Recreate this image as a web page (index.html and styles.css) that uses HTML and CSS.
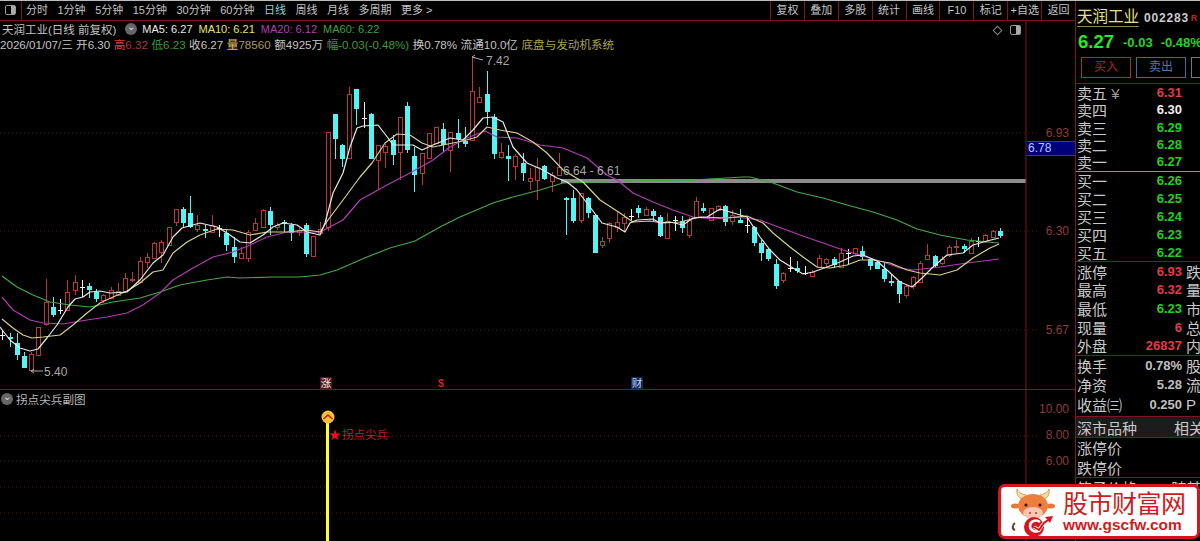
FILE: index.html
```html
<!DOCTYPE html>
<html lang="zh-CN">
<head>
    <meta charset="UTF-8">
    <title>天润工业 日线</title>
    <link rel="stylesheet" href="styles.css">
</head>
<body>
    <div class="app">
        <div class="main">
            <div class="toolbar">
                <div class="panel-btn"><span class="panel-icon"></span></div>
                <div class="tabs">
                    <span>分时</span><span>1分钟</span><span>5分钟</span><span>15分钟</span><span>30分钟</span><span>60分钟</span>
                    <span class="active">日线</span><span>周线</span><span>月线</span><span>多周期</span><span>更多 &gt;</span>
                </div>
                <div class="tools">
                    <span>复权</span><span>叠加</span><span>多股</span><span>统计</span><span>画线</span><span>F10</span><span>标记</span><span>+自选</span><span>返回</span>
                </div>
            </div>

            <div class="pane pane-top">
                <svg class="chart" viewBox="0 21 1075 368" width="1075" height="368">
                    <g class="grid">
                        <line x1="0" y1="133" x2="1040" y2="133"/>
                        <line x1="0" y1="231" x2="1040" y2="231"/>
                        <line x1="0" y1="330" x2="1040" y2="330"/>
                    </g>
                    <rect class="band" x="561" y="179" width="465" height="4"/>
                    <g id="candles"></g>
                    <g id="averages"></g>
                    <path class="pointer" d="M475 58l-3-1 3-2M472 57l11 3M43 371H31l3-2M31 371l3 2"/>
                    <text class="note" x="486" y="65">7.42</text>
                    <text class="note" x="44" y="376">5.40</text>
                    <text class="note" x="563" y="175">6.64 - 6.61</text>
                    <line class="axis" x1="1026" y1="21" x2="1026" y2="389"/>
                    <text class="tick" x="1069" y="137" text-anchor="end">6.93</text>
                    <text class="tick" x="1069" y="235" text-anchor="end">6.30</text>
                    <text class="tick" x="1069" y="334" text-anchor="end">5.67</text>
                </svg>
                <div class="legend">
                    <div class="legend-line">
                        <span class="title">天润工业(日线 前复权)</span>
                        <span class="chevron">&#8964;</span>
                        <span class="ma5">MA5: 6.27</span>
                        <span class="ma10">MA10: 6.21</span>
                        <span class="ma20">MA20: 6.12</span>
                        <span class="ma60">MA60: 6.22</span>
                    </div>
                    <div class="legend-line quote">
                        <span>2026/01/07/三 开6.30</span>
                        <span class="up"><b>高</b>6.32</span>
                        <span class="down"><b>低</b>6.23</span>
                        <span>收6.27</span>
                        <span class="vol"><b>量</b>78560</span>
                        <span>额4925万</span>
                        <span class="down"><b>幅</b>-0.03(-0.48%)</span>
                        <span>换0.78%</span>
                        <span>流通10.0亿</span>
                        <span class="formula">底盘与发动机系统</span>
                    </div>
                </div>
                <div class="corner-icons">
                    <span class="diamond"></span>
                    <span class="panel-icon"></span>
                </div>
                <div class="price-tag">6.78</div>
                <span class="event event-rise">涨</span>
                <span class="event event-dollar">$</span>
                <span class="event event-fin">财</span>
            </div>

            <div class="pane pane-sub">
                <svg class="chart" viewBox="0 390 1075 151" width="1075" height="151">
                    <g class="grid">
                        <line x1="0" y1="436" x2="1040" y2="436"/>
                        <line x1="0" y1="461" x2="1040" y2="461"/>
                        <line x1="0" y1="487" x2="1040" y2="487"/>
                        <line x1="0" y1="513" x2="1040" y2="513"/>
                    </g>
                    <rect class="signal" x="326" y="418" width="3" height="123"/>
                    <circle class="signal-dot" cx="328" cy="417" r="6.5"/>
                    <path class="signal-mark" d="M323.5 419l4.5-4 4.5 4"/>
                    <path class="signal-star" d="M335 429.500l1.500 4h4.300l-3.500 2.600 1.300 4.200-3.600-2.500-3.600 2.500 1.300-4.200-3.500-2.600h4.300z"/>
                    <text class="signal-text" x="342" y="439">拐点尖兵</text>
                    <line class="axis" x1="1026" y1="390" x2="1026" y2="541"/>
                    <text class="tick" x="1069" y="413" text-anchor="end">10.00</text>
                    <text class="tick" x="1069" y="439" text-anchor="end">8.00</text>
                    <text class="tick" x="1069" y="465" text-anchor="end">6.00</text>
                </svg>
                <div class="legend legend-sub">
                    <span class="chevron">&#8964;</span>
                    <span class="sub-title">拐点尖兵副图</span>
                </div>
            </div>
        </div>

        <div class="side">
            <div class="quote-head">
                <div class="name-row">
                    <span class="stock-name">天润工业</span>
                    <span class="stock-code">002283</span>
                    <span class="stock-r">R</span>
                </div>
                <div class="price-row">
                    <span class="last">6.27</span>
                    <span class="change">-0.03</span>
                    <span class="change">-0.48%</span>
                </div>
                <div class="trade-row">
                    <span class="trade buy">买入</span>
                    <span class="trade sell">卖出</span>
                    <span class="trade more"></span>
                </div>
            </div>

            <div class="block book-sell">
                <div class="row"><span class="label">卖五 <i>¥</i></span><span class="val red">6.31</span></div>
                <div class="row"><span class="label">卖四</span><span class="val white">6.30</span></div>
                <div class="row"><span class="label">卖三</span><span class="val green">6.29</span></div>
                <div class="row"><span class="label">卖二</span><span class="val green">6.28</span></div>
                <div class="row"><span class="label">卖一</span><span class="val green">6.27</span></div>
            </div>
            <div class="block book-buy">
                <div class="row"><span class="label">买一</span><span class="val green">6.26</span></div>
                <div class="row"><span class="label">买二</span><span class="val green">6.25</span></div>
                <div class="row"><span class="label">买三</span><span class="val green">6.24</span></div>
                <div class="row"><span class="label">买四</span><span class="val green">6.23</span></div>
                <div class="row"><span class="label">买五</span><span class="val green">6.22</span></div>
            </div>
            <div class="block stats">
                <div class="row"><span class="label">涨停</span><span class="val red">6.93</span><span class="extra">跌</span></div>
                <div class="row"><span class="label">最高</span><span class="val red">6.32</span><span class="extra">量</span></div>
                <div class="row"><span class="label">最低</span><span class="val green">6.23</span><span class="extra">市</span></div>
                <div class="row"><span class="label">现量</span><span class="val red">6</span><span class="extra">总</span></div>
                <div class="row"><span class="label">外盘</span><span class="val red">26837</span><span class="extra">内</span></div>
            </div>
            <div class="block finance">
                <div class="row"><span class="label">换手</span><span class="val grey">0.78%</span><span class="extra">股</span></div>
                <div class="row"><span class="label">净资</span><span class="val grey">5.28</span><span class="extra">流</span></div>
                <div class="row"><span class="label">收益㈢</span><span class="val grey">0.250</span><span class="extra">P</span></div>
            </div>
            <div class="block tab-row">
                <span class="label">深市品种</span><span class="extra">相关</span>
            </div>
            <div class="block limits">
                <div class="row"><span class="label">涨停价</span></div>
                <div class="row"><span class="label">跌停价</span></div>
            </div>
            <div class="row last-row"><span class="label">筹子价格 98%随基准</span></div>
        </div>

        <div class="watermark">
            <svg class="cow" viewBox="0 0 50 50" width="50" height="50">
                <path d="M6 36c-3 2-3 6 0 7" fill="none" stroke="#6b3a1e" stroke-width="2"/>
                <path d="M14 12C9 11 7 7 8 2c2 4 5 5 9 6z" fill="#f7dc9a" stroke="#b0702a" stroke-width=".6"/>
                <path d="M34 12c5-1 7-5 6-10-2 4-5 5-9 6z" fill="#f7dc9a" stroke="#b0702a" stroke-width=".6"/>
                <ellipse cx="6" cy="19" rx="4" ry="2.500" fill="#e8763a"/>
                <ellipse cx="42" cy="19" rx="4" ry="2.500" fill="#e8763a"/>
                <ellipse cx="24" cy="19" rx="15" ry="12" fill="#ee7d3e"/>
                <ellipse cx="24" cy="26" rx="10" ry="6" fill="#f9c6b4"/>
                <circle cx="17" cy="18" r="1.600" fill="#3a1d10"/>
                <circle cx="31" cy="18" r="1.600" fill="#3a1d10"/>
                <circle cx="21" cy="26" r="1" fill="#a0402a"/>
                <circle cx="27" cy="26" r="1" fill="#a0402a"/>
                <circle cx="25" cy="40" r="10" fill="#d8141c"/>
                <path d="M31 35c-4-3-10-1-10 4s6 7 10 4" fill="none" stroke="#fff" stroke-width="2.500"/>
                <path d="M25 40l5 3 4-6 4-2" fill="none" stroke="#fff" stroke-width="3.500"/>
                <path d="M25 40l5 3 5-7 4-3" fill="none" stroke="#d8141c" stroke-width="2"/>
                <path d="M44 29l-8 1 5 6z" fill="#d8141c"/>
            </svg>
            <div class="site">
                <div class="site-name">股市财富网</div>
                <div class="site-url">www.gscfw.com</div>
            </div>
        </div>
    </div>

    <script src="script.js"></script>
</body>
</html>
```

FILE: styles.css
```css
* {
    box-sizing: border-box;
}

body {
    margin: 0;
    background-color: #000;
    overflow: hidden;
    font-family: "Liberation Sans", "Noto Sans CJK SC", sans-serif;
    color: #c4c4c4;
}

.app {
    position: relative;
    display: flex;
    width: 1200px;
    height: 541px;
    overflow: hidden;
    background-color: #000;
    border-top: 1px solid #bbb;
}

.main {
    width: 1075px;
    flex: none;
}

/* top bar */
.toolbar {
    display: flex;
    height: 20px;
    border-bottom: 1px solid #7c1622;
    font-size: 11px;
    line-height: 18px;
}

.panel-btn {
    width: 22px;
    padding: 4px 0 0 5px;
    border-right: 1px solid #7c1622;
}

.panel-icon {
    display: block;
    width: 11px;
    height: 10px;
    border: 1px solid #999;
    border-radius: 2px;
    background: linear-gradient(90deg, transparent 55%, #aaa 55%);
}

.tabs {
    display: flex;
    gap: 9.500px;
    padding-left: 4px;
    flex: 1;
    white-space: nowrap;
}

.tabs .active {
    color: #7fd8d8;
}

.tools {
    display: flex;
    width: 305px;
    flex: none;
}

.tools span {
    width: 34px;
    text-align: center;
    border-left: 1px solid #7c1622;
    white-space: nowrap;
}

/* chart panes */
.pane {
    position: relative;
}

.pane-top {
    height: 368px;
}

.pane-sub {
    height: 151px;
    border-top: 1px solid #7c1622;
}

.chart {
    display: block;
}

.grid line {
    stroke: #5c1a1a;
    stroke-dasharray: 1 3;
}

.band {
    fill: #8c8c8c;
}

.axis {
    stroke: #7c1622;
}

.tick {
    fill: #8e3c3c;
    font-size: 12px;
}

.note {
    fill: #a8a8a8;
    font-size: 12px;
}

.pointer {
    fill: none;
    stroke: #aaa;
}

.legend {
    position: absolute;
    left: 2px;
    top: 0;
    font-size: 11px;
    white-space: nowrap;
}

.legend-line {
    display: flex;
    align-items: center;
    height: 15px;
}

.legend-line .title {
    font-size: 11.500px;
    margin-right: 9px;
}

.chevron {
    width: 12px;
    height: 12px;
    margin-right: 5px;
    border-radius: 50%;
    background-color: #666;
    color: #ddd;
    font-size: 10px;
    line-height: 7px;
    text-align: center;
}

.ma5 {
    color: #e8e8e8;
    margin-right: 6px;
}

.ma10 {
    color: #e8e070;
    margin-right: 6px;
}

.ma20 {
    color: #b040b0;
    margin-right: 6px;
}

.ma60 {
    color: #3fa03f;
}

.quote {
    gap: 3.500px;
    margin-left: -2px;
    font-size: 11.600px;
}

.quote b {
    font-weight: normal;
}

.up {
    color: #a83a3a;
}

.up b {
    color: #e04040;
}

.down {
    color: #3b9a3b;
}

.vol {
    color: #a89a60;
}

.vol b {
    color: #e0c060;
}

.formula {
    color: #a8a050;
}

.corner-icons {
    position: absolute;
    left: 994px;
    top: 4px;
    display: flex;
    align-items: center;
    gap: 9px;
}

.diamond {
    width: 7px;
    height: 7px;
    border: 1px solid #888;
    transform: rotate(45deg);
}

.price-tag {
    position: absolute;
    left: 1027px;
    top: 120px;
    width: 48px;
    height: 15px;
    padding-left: 1px;
    background-color: #00007c;
    border-top: 1px solid #6a2a6a;
    border-bottom: 1px solid #6a2a6a;
    color: #b8c8ff;
    font-size: 12px;
    line-height: 13px;
}

.event {
    position: absolute;
    top: 356px;
    width: 12px;
    height: 12px;
    font-size: 10.500px;
    line-height: 12px;
    text-align: center;
}

.event-rise {
    left: 320px;
    background-color: #5a1218;
    color: #eee;
}

.event-dollar {
    left: 435px;
    color: #d02028;
    font-weight: bold;
}

.event-fin {
    left: 631px;
    background-color: #102a5a;
    color: #c8d8f0;
}

.legend-sub {
    top: 1px;
    left: 1px;
    display: flex;
    align-items: center;
    height: 15px;
}

.legend-sub .chevron {
    margin-right: 3px;
}

.sub-title {
    font-size: 11.600px;
    color: #b8b8b8;
}

.signal {
    fill: #ffff30;
}

.signal-dot {
    fill: #f6c23c;
}

.signal-mark {
    fill: none;
    stroke: #c8201c;
    stroke-width: 1.600;
}

.signal-star {
    fill: #e8101c;
}

.signal-text {
    fill: #c01f28;
    font-size: 11.500px;
}

/* right panel */
.side {
    width: 125px;
    flex: none;
    border-left: 1px solid #7c1622;
    overflow: hidden;
}

.quote-head {
    height: 83px;
    border-bottom: 1px solid #7c1622;
}

.name-row {
    display: flex;
    align-items: center;
    height: 30px;
    padding: 3px 0 0 1px;
}

.stock-name {
    color: #e6e08c;
    font-size: 15.500px;
    border-bottom: 1px solid #8c8850;
    line-height: 18px;
    margin-right: 5px;
}

.stock-code {
    font-size: 12px;
    font-weight: bold;
    letter-spacing: .8px;
    color: #ccc;
    margin-right: 2px;
}

.stock-r {
    font-size: 9px;
    font-weight: bold;
    color: #c02030;
}

.price-row {
    display: flex;
    align-items: center;
    gap: 8px;
    height: 22px;
    padding-left: 2px;
    white-space: nowrap;
    color: #20d820;
    font-size: 13px;
    font-weight: bold;
}

.last {
    color: #28e628;
    font-size: 18.500px;
    margin-right: 1px;
}

.trade-row {
    display: flex;
    gap: 5px;
    padding: 4px 0 0 5px;
}

.trade {
    flex: none;
    width: 50px;
    height: 21px;
    border: 1px solid #a03030;
    font-size: 12px;
    line-height: 18px;
    text-align: center;
    color: #b02828;
}

.trade.sell {
    border-color: #406898;
    color: #4a78b8;
}

.trade.more {
    border-color: #777;
}

.block {
    border-bottom: 1px solid #7c1622;
}

.row {
    display: flex;
    align-items: center;
    padding-left: 1px;
    white-space: nowrap;
}

.label {
    flex: 1;
    font-size: 15px;
    color: #c8c8c8;
}

.label i {
    font-style: normal;
    color: #999;
    font-size: 15px;
}

.val {
    font-size: 13px;
    font-weight: bold;
}

.extra {
    flex: none;
    width: 14px;
    margin-left: 4px;
    font-size: 15px;
    color: #c8c8c8;
    overflow: hidden;
}

.row:not(:has(.extra)) {
    padding-right: 18px;
}

.red {
    color: #e03c46;
}

.green {
    color: #20d020;
}

.white {
    color: #eee;
}

.grey {
    color: #c0c0c0;
}

.book-sell {
    height: 88px;
    border-bottom-color: #a08a8a;
}

.book-sell .row {
    height: 17.300px;
}

.book-buy {
    height: 90px;
}

.book-buy .row {
    height: 17.800px;
}

.stats {
    height: 94px;
}

.stats .row {
    height: 18.600px;
}

.finance {
    height: 61px;
}

.finance .row {
    height: 19.300px;
}

.tab-row {
    display: flex;
    align-items: center;
    height: 21px;
    padding-left: 1px;
    background-color: #1c1c1c;
    white-space: nowrap;
}

.tab-row .extra {
    width: 26px;
}

.limits {
    height: 40px;
}

.limits .row {
    height: 19.500px;
}

.last-row {
    height: 18px;
    padding-right: 0;
}

/* logo in the corner */
.watermark {
    position: absolute;
    left: 998px;
    top: 483px;
    display: flex;
    align-items: center;
    gap: 4px;
    width: 202px;
    height: 55px;
    padding-left: 8px;
    background-color: #fff;
    border: 3px solid #d8141c;
    border-radius: 7px;
}

.cow {
    flex: none;
}

.site {
    color: #d01a22;
    white-space: nowrap;
}

.site-name {
    font-size: 25px;
    line-height: 27px;
    letter-spacing: -.5px;
}

.site-url {
    font-size: 15.400px;
    font-weight: bold;
    line-height: 14px;
}
```

FILE: script.js
```js
// each candle: type, body top, body bottom, high, low (svg y values)
const candles = [
    ['w',335,335,330,340],['c',337,339,333,347],['c',343,355,333,360],['c',356,368,352,368],['r',354,370,352,372],
    ['r',327,355,327,355],['r',302,324,279,326],['c',307,315,297,317],['w',310,310,299,314],['r',292,310,280,311],
    ['r',282,290,275,295],['w',287,287,280,297],['c',286,290,283,298],['c',292,299,289,302],['r',295,300,294,303],
    ['r',290,298,287,299],['r',291,295,283,296],['r',278,291,273,293],['r',279,280,272,282],['r',261,282,257,283],
    ['r',257,262,253,268],['r',243,258,242,259],['r',242,252,240,263],['r',227,245,227,245],['r',209,222,209,226],
    ['c',209,223,207,228],['c',213,227,196,228],['r',225,229,215,232],['c',229,231,225,238],['r',225,232,215,233],
    ['w',228,228,225,237],['c',233,245,229,251],['c',247,257,237,263],['r',253,258,247,259],['r',232,258,230,262],
    ['r',223,230,218,231],['r',210,227,209,227],['c',211,225,207,235],['r',225,227,223,230],['c',222,224,220,232],
    ['c',225,233,223,241],['r',230,232,228,236],['c',225,254,223,257],['r',236,256,236,257],['r',229,233,222,233],
    ['r',132,227,132,231],['c',114,139,114,159],['c',145,159,144,167],['r',94,158,87,159],['c',89,109,89,125],
    ['w',118,118,102,128],['c',114,159,113,159],['r',145,160,145,189],['r',146,152,144,168],['c',140,155,135,165],
    ['r',117,152,117,180],['c',106,150,102,153],['c',156,175,147,192],['r',153,173,153,185],['r',133,158,133,158],
    ['r',127,143,127,144],['c',129,145,123,152],['r',132,150,132,172],['c',133,139,119,148],['c',141,144,127,147],
    ['r',91,140,56,141],['r',97,102,87,102],['c',94,112,71,125],['c',117,154,114,159],['r',152,157,143,159],
    ['c',156,159,145,181],['r',156,166,154,180],['c',163,173,153,181],['r',178,181,168,190],['r',167,180,158,200],
    ['c',166,179,165,180],['r',175,181,172,192],['r',167,175,153,176],['c',198,200,197,235],['c',198,221,190,223],
    ['r',193,220,193,223],['c',198,213,197,218],['c',215,253,215,253],['r',241,245,237,248],['r',223,238,222,243],
    ['r',222,227,212,232],['r',217,223,213,232],['w',216,216,209,220],['c',208,213,205,218],['r',209,215,207,216],
    ['c',211,216,209,222],['c',217,236,215,237],['r',221,238,213,238],['w',220,220,216,231],['c',221,228,216,233],
    ['r',220,235,217,238],['r',201,217,197,217],['c',208,211,203,213],['r',208,220,208,220],['r',206,210,205,210],
    ['c',206,222,205,226],['r',215,221,210,225],['c',220,223,209,223],['w',225,225,217,233],['c',227,243,226,246],
    ['c',243,253,240,261],['c',249,259,248,261],['c',264,286,259,289],['r',273,280,272,283],['w',268,268,257,272],
    ['c',268,271,261,273],['w',273,273,266,275],['r',272,276,270,277],['r',258,267,255,268],['r',259,263,258,267],
    ['c',259,265,257,268],['r',253,267,248,268],['w',253,253,249,264],['r',248,253,248,255],['c',251,257,246,260],
    ['c',259,266,258,270],['c',262,269,262,269],['c',269,279,263,282],['c',281,283,274,286],['c',281,294,281,303],
    ['r',286,295,285,298],['r',277,286,276,289],['r',263,282,261,283],['r',255,259,244,260],['c',256,266,255,268],
    ['r',259,263,256,265],['r',247,255,245,257],['r',246,247,240,253],['c',246,249,244,253],['r',241,253,238,254],
    ['w',241,241,237,247],['r',235,241,234,243],['r',231,237,230,237],['c',231,236,228,238]
];

// moving averages, as x y pairs
const averages = {
    '#e8e8e8': '0,327 10,340 20,348 30,351 38,349 47,338 57,325 68,307 75,299 83,297 90,292 100,291 110,293 127,292 140,280 153,263 163,255 173,237 182,228 200,223 217,227 227,233 240,242 250,243 263,235 273,227 283,223 297,225 307,232 320,235 325,223 333,193 343,173 350,147 357,128 363,126 378,125 388,138 393,145 403,145 413,145 422,150 433,145 450,138 463,140 473,130 483,118 493,117 503,122 513,147 527,163 543,170 557,178 567,182 577,190 590,207 602,223 617,227 625,232 630,223 637,220 653,219 660,223 670,222 683,225 693,218 707,217 720,209 730,212 747,217 760,237 770,250 780,260 793,268 803,274 813,272 827,267 840,262 853,256 863,255 877,261 887,270 900,282 912,287 922,278 933,267 947,255 963,253 973,245 987,241 999,238',
    '#d8d08c': '2,319 13,328 23,335 32,338 43,337 60,335 73,325 87,313 100,303 113,297 127,291 140,283 153,272 163,270 173,253 187,242 200,235 217,229 233,230 250,235 267,232 287,232 307,230 320,232 328,220 343,200 360,177 372,163 385,143 397,134 410,135 422,143 433,147 443,145 463,141 477,137 487,127 500,130 517,133 533,142 547,153 563,170 583,182 600,200 620,213 633,222 650,221 663,223 680,222 700,217 727,218 747,216 763,223 773,233 790,247 803,257 817,267 830,268 847,265 860,260 873,260 890,263 907,270 920,273 940,275 957,270 973,258 990,248 999,244',
    '#b23ab2': '2,297 13,310 30,320 43,323 63,324 87,320 107,317 127,313 143,305 160,293 173,280 193,268 213,257 233,252 250,245 267,237 287,232 320,232 343,220 360,200 387,185 410,173 433,160 450,147 467,138 485,131 497,137 517,138 540,145 563,148 587,158 607,175 617,180 633,193 653,202 673,210 693,217 713,219 737,217 760,220 773,225 800,235 823,243 843,250 863,256 883,262 900,268 913,270 940,267 967,263 999,259',
    '#46a846': '2,276 17,287 33,295 50,302 70,305 90,307 113,302 140,298 160,292 180,285 207,280 227,277 240,278 273,277 300,277 320,275 337,270 367,257 390,248 415,241 440,227 460,217 493,203 513,197 540,190 563,183 600,182 627,181 693,180 743,177 750,177 773,183 797,192 823,198 847,205 873,212 897,220 917,229 940,235 967,240 987,242 999,243'
};

const colors = { r: '#b8383a', c: '#54f4f4', w: '#f0f0f0' };

function candleMarkup(candle, index) {
    const [type, top, bottom, high, low] = candle;
    const x = Math.round(2.3 + 7.228 * index);
    const color = colors[type];
    let parts = `<line x1="${x + 0.5}" y1="${high}" x2="${x + 0.5}" y2="${low}" stroke="${color}"/>`;
    if (type === 'w') {
        parts += `<line x1="${x - 2}" y1="${top + 0.5}" x2="${x + 3}" y2="${top + 0.5}" stroke="${color}"/>`;
    } else if (type === 'c') {
        parts += `<rect x="${x - 2}" y="${top}" width="5" height="${bottom - top}" fill="${color}"/>`;
    } else {
        parts += `<rect x="${x - 2 + 0.5}" y="${top + 0.5}" width="4" height="${bottom - top}" fill="#000" stroke="${color}"/>`;
    }
    return parts;
}

document.getElementById('candles').innerHTML = candles.map(candleMarkup).join('');

document.getElementById('averages').innerHTML = Object.keys(averages)
    .reverse()
    .map(color => `<polyline points="${averages[color]}" fill="none" stroke="${color}" stroke-width="1.2" stroke-linejoin="round"/>`)
    .join('');
```
